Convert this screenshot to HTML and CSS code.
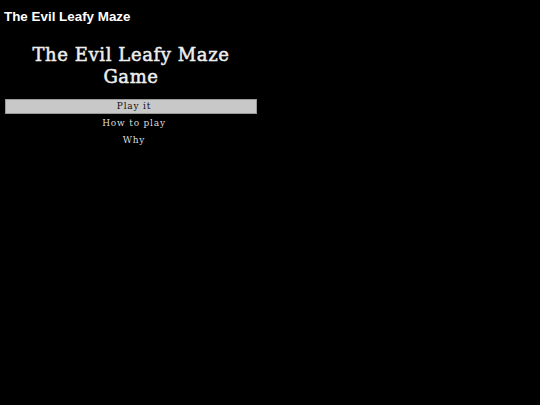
FILE: index.html
```html
<!DOCTYPE html>
<html>
<head>
<meta charset="utf-8">
<link rel="stylesheet" href="styles.css">
</head>
<body>
<div class="topbar">The Evil Leafy Maze</div>
<div class="panel">
  <h1 class="title">The Evil Leafy Maze Game</h1>
  <ul class="menu">
    <li class="item active">Play it</li>
    <li class="item">How to play</li>
    <li class="item">Why</li>
  </ul>
</div>
</body>
</html>
```
FILE: styles.css
```css
html, body {
  margin: 0;
  padding: 0;
  background: #000;
  width: 540px;
  height: 405px;
  overflow: hidden;
}
.topbar {
  font-family: "Liberation Sans", Arial, sans-serif;
  font-weight: bold;
  font-size: 13.4px;
  color: #fff;
  padding: 9px 0 0 4px;
  line-height: 16px;
}
.panel {
  width: 252px;
  margin-left: 5px;
  padding-top: 19px;
}
.title {
  font-family: "DejaVu Serif", serif;
  font-weight: normal;
  font-size: 18px;
  letter-spacing: 0.6px;
  line-height: 22px;
  color: #eee;
  text-align: center;
  margin: 0 0 11px 0;
  padding: 0 16px;
  -webkit-text-stroke: 0.5px #eee;
}
.menu {
  list-style: none;
  margin: 0;
  padding: 0;
}
.item {
  font-family: "DejaVu Serif", serif;
  font-size: 9px;
  letter-spacing: 0.8px;
  color: #ddd;
  text-align: center;
  height: 15px;
  line-height: 15px;
  margin-bottom: 2px;
  padding-left: 6px;
  box-sizing: border-box;
}
.item.active {
  background: #c8c8c8;
  color: #111;
  border: 1px solid #999;
  line-height: 13px;
}
```
